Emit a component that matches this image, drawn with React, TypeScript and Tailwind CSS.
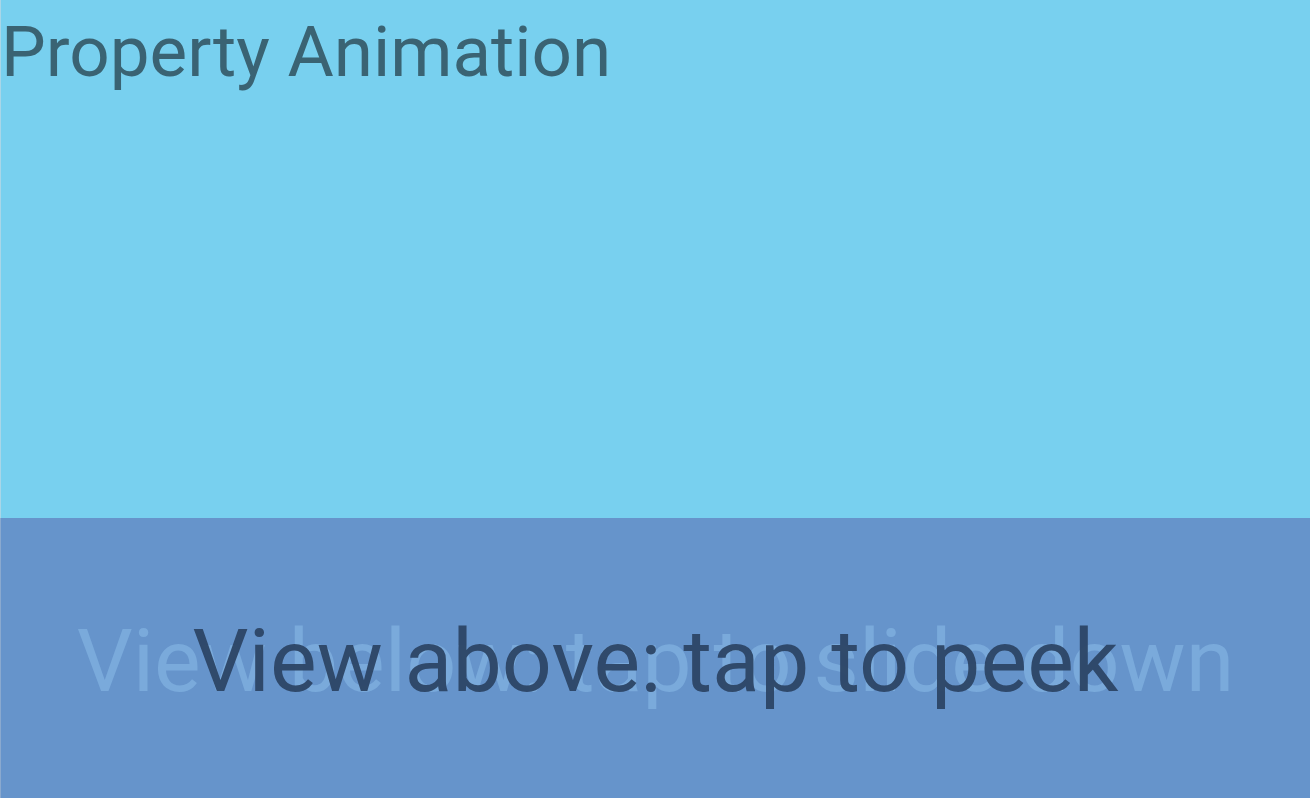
export default function App() {
  return (
    <div className="flex h-[798px] w-[1310px] flex-col overflow-hidden font-['Roboto',sans-serif]">
      <div className="h-[518px] border-l border-[#a9d6e8] bg-[#78d0ef]">
        <h1 className="pt-[16px] text-[71px] font-normal leading-none text-[#3a6373]">Property Animation</h1>
      </div>
      <div className="relative flex flex-1 items-center justify-center border-l border-[#8aa9cf] bg-[#6694cb] pt-[6px]">
        <span className="whitespace-nowrap text-[88px] leading-none text-[#7aaadb]">View below: tap to slide down</span>
        <span className="absolute inset-0 flex items-center justify-center whitespace-nowrap pt-[6px] text-[88px] leading-none text-[#2c4465]/95">
          View above: tap to peek
        </span>
      </div>
    </div>
  );
}
